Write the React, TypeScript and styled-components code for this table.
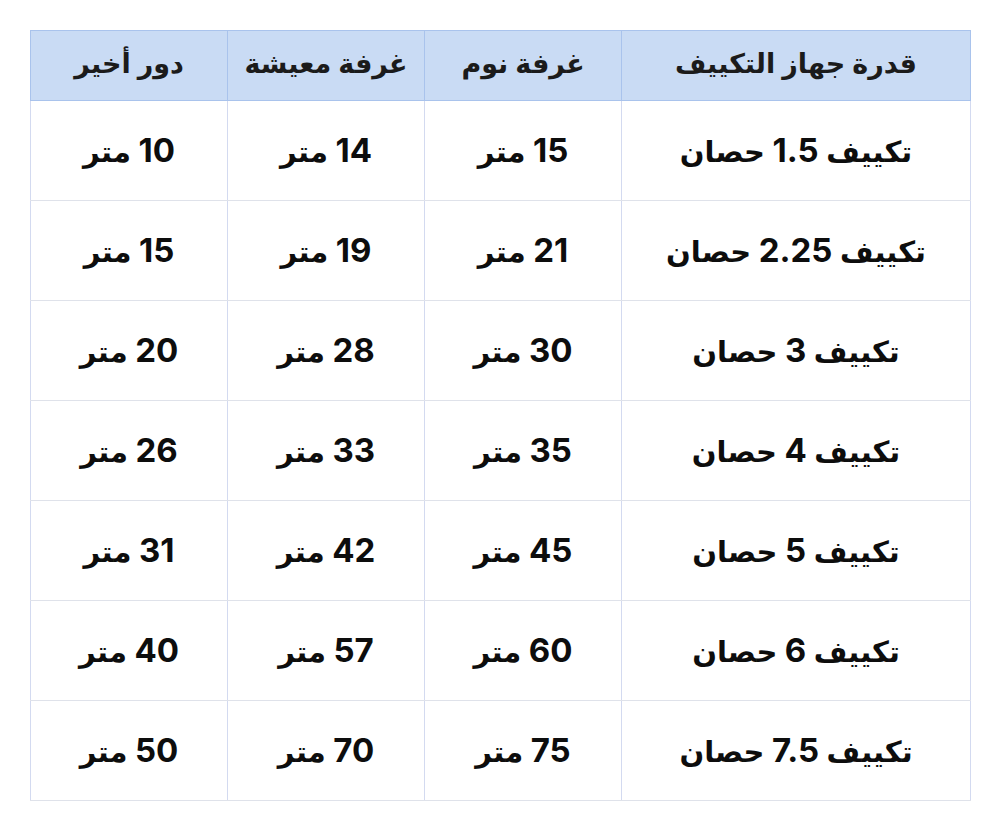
import React from "react";
import styled, { createGlobalStyle } from "styled-components";

const Global = createGlobalStyle`
  html, body { margin: 0; padding: 0; background: #ffffff; }
  body { font-family: "Noto Sans", "DejaVu Sans", sans-serif; }
`;

const Page = styled.div`
  width: 1000px;
  height: 832px;
  padding: 30px 30px 0 30px;
  box-sizing: border-box;
  background: #fff;
`;

const Table = styled.table`
  width: 940px;
  border-collapse: collapse;
  table-layout: fixed;
  direction: rtl;
  font-family: "Noto Sans", "DejaVu Sans", sans-serif;
  color: #111;
`;

const HeadCell = styled.th<{ $w: number }>`
  width: ${(p) => p.$w}px;
  height: 70px;
  box-sizing: border-box;
  background: #c9dbf4;
  border: 1px solid #a9c3ec;
  font-size: 27px;
  font-weight: 700;
  color: #1b1b1b;
  text-align: center;
  vertical-align: middle;
  padding: 0 0 6px 0;
`;

const Cell = styled.td`
  height: 100px;
  box-sizing: border-box;
  border: 1px solid #dfe2ea;
  border-left-color: #d3daf0;
  border-right-color: #d3daf0;
  font-size: 29px;
  font-weight: 700;
  color: #0d0d0d;
  text-align: center;
  vertical-align: middle;
  padding: 0 0 2px 0;
  white-space: nowrap;
`;

const Num = styled.span`
  font-family: Inter, "Noto Sans", sans-serif;
  font-size: 33px;
  font-weight: 700;
  letter-spacing: -0.5px;
  unicode-bidi: isolate;
`;

const headers = ["قدرة جهاز التكييف", "غرفة نوم", "غرفة معيشة", "دور أخير"];
const widths = [349, 197, 197, 197];

const rows: [string, number, number, number][] = [
  ["1.5", 15, 14, 10],
  ["2.25", 21, 19, 15],
  ["3", 30, 28, 20],
  ["4", 35, 33, 26],
  ["5", 45, 42, 31],
  ["6", 60, 57, 40],
  ["7.5", 75, 70, 50],
];

export default function App() {
  return (
    <Page>
      <Global />
      <Table>
        <thead>
          <tr>
            {headers.map((h, i) => (
              <HeadCell key={h} $w={widths[i]}>
                {h}
              </HeadCell>
            ))}
          </tr>
        </thead>
        <tbody>
          {rows.map(([hp, bed, living, top]) => (
            <tr key={hp}>
              <Cell>
                تكييف <Num>{hp}</Num> حصان
              </Cell>
              <Cell>
                <Num>{bed}</Num> متر
              </Cell>
              <Cell>
                <Num>{living}</Num> متر
              </Cell>
              <Cell>
                <Num>{top}</Num> متر
              </Cell>
            </tr>
          ))}
        </tbody>
      </Table>
    </Page>
  );
}
